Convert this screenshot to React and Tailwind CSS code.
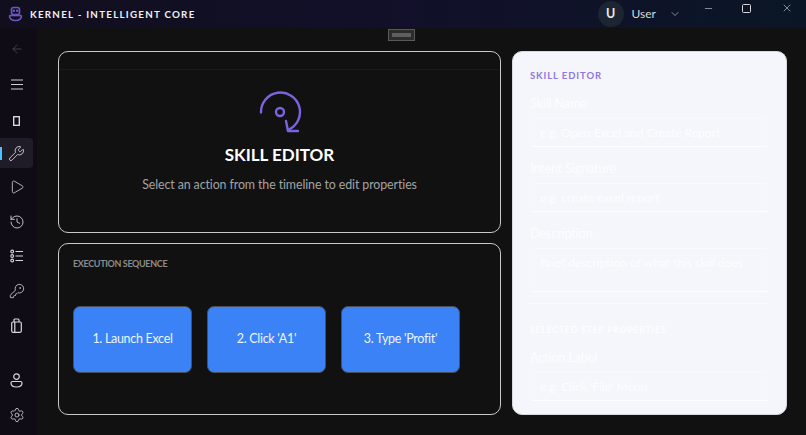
import React from "react";
import { Wrench, Play, History, Settings, KeyRound, ArrowLeft, ChevronDown, X, Minus } from "lucide-react";

function NavBtn({ children, active, className = "" }) {
  return (
    <div className={`relative w-[33px] h-[30px] flex items-center justify-center rounded-r-[4px] ${active ? "bg-[#1f1c28]" : ""} ${className}`}>
      {active && <span className="absolute left-0 top-[9px] h-[13px] w-[2px] bg-[#4cc2ff]" />}
      {children}
    </div>
  );
}

function Field({ label, placeholder, tall }) {
  return (
    <div className="flex flex-col">
      <div className="text-[12.500px] tracking-[-0.1px] leading-[18px] text-[#fcfdff]">{label}</div>
      <div className={`mt-[5px] ml-[2px] px-[7px] rounded-t-[3px] border border-x-[#f6f7fc] border-t-[#f8f9fd] border-b-[#fdfdff] ${tall ? "h-[44px]" : "h-[29px]"}`}>
        <span className="block pt-[5px] text-[12px] leading-[18px] text-[#fcfdff] whitespace-nowrap">{placeholder}</span>
      </div>
    </div>
  );
}

function Step({ children }) {
  return (
    <div className="w-[119px] h-[67px] rounded-[7px] bg-[#3b82f6] border border-[#4a4f58] flex items-center justify-center text-[12.500px] tracking-[-0.3px] text-[#eef4ff]">
      {children}
    </div>
  );
}

export default function App() {
  return (
    <div className="w-[806px] h-[435px] overflow-hidden flex flex-col bg-[#111111] font-['Lato','Noto_Sans',sans-serif]">
      <header className="h-[28px] shrink-0 flex items-center bg-gradient-to-r from-[#110e1d] via-[#12102a] to-[#0a1626]">
        <svg className="ml-[8px]" width="15" height="16" viewBox="0 0 15 16" fill="none" stroke="#6d55c4" strokeWidth="1.6">
          <rect x="3.500" y="1.500" width="8" height="7" rx="2" />
          <path d="M1.500 9.500c0 3 1.500 5 6 5s6-2 6-5" />
          <path d="M1.500 9.500h12" />
          <circle cx="5.800" cy="4.800" r=".5" fill="#6d55c4" />
          <circle cx="9.200" cy="4.800" r=".5" fill="#6d55c4" />
        </svg>
        <span className="ml-[7px] text-[9.800px] font-bold tracking-[1.240px] text-[#f0f0f4] whitespace-nowrap">KERNEL - INTELLIGENT CORE</span>
        <div className="ml-auto flex items-center">
          <div className="w-[26px] h-[26px] rounded-full bg-[#1c2532] flex items-center justify-center text-[12.500px] font-bold text-[#e8e8ec]">U</div>
          <span className="ml-[8px] text-[12px] text-[#d6d8dc]">User</span>
          <ChevronDown className="ml-[13px]" size={12} color="#c8cad0" strokeWidth={1.3} />
          <Minus className="ml-[22px] -mt-[12px]" size={11} color="#d8d8dc" strokeWidth={1.3} />
          <div className="ml-[28px] -mt-[12px] w-[9px] h-[9px] rounded-[1.500px] border border-[#d8d8dc]" />
          <X className="ml-[30px] mr-[13px] -mt-[12px]" size={12} color="#d8d8dc" strokeWidth={1.2} />
        </div>
      </header>

      <div className="flex-1 min-h-0 flex">
        <nav className="w-[37px] shrink-0 bg-[#0f0c16] flex flex-col pt-[6px]">
          <NavBtn><ArrowLeft size={14} color="#4b4852" strokeWidth={1.4} /></NavBtn>
          <NavBtn className="mt-[5px]">
            <svg width="14" height="11" viewBox="0 0 14 11" stroke="#cfcfd4" strokeWidth="1.2"><path d="M1 1h12M1 5.500h12M1 10h12" /></svg>
          </NavBtn>
          <NavBtn className="mt-[7px]">
            <svg width="7" height="10" viewBox="0 0 7 10" fill="none" stroke="#e4e4e8" strokeWidth="1.3"><rect x=".7" y=".7" width="5.600" height="8.600" /></svg>
          </NavBtn>
          <NavBtn active className="mt-[2px]"><Wrench size={17} color="#d8d8dc" strokeWidth={1.2} /></NavBtn>
          <NavBtn className="mt-[4px]"><Play size={16} color="#d8d8dc" strokeWidth={1.2} /></NavBtn>
          <NavBtn className="mt-[5px]"><History size={16} color="#d8d8dc" strokeWidth={1.3} /></NavBtn>
          <NavBtn className="mt-[4px]">
            <svg width="14" height="14" viewBox="0 0 14 14" fill="none" stroke="#d8d8dc" strokeWidth="1.1">
              <circle cx="2.200" cy="2.500" r="1.400" /><circle cx="2.200" cy="7" r="1.400" /><circle cx="2.200" cy="11.500" r="1.400" />
              <path d="M5.500 2.500H13M5.500 7H13M5.500 11.500H13" />
            </svg>
          </NavBtn>
          <NavBtn className="mt-[5px]"><KeyRound size={16} color="#d8d8dc" strokeWidth={1.2} /></NavBtn>
          <NavBtn className="mt-[4px]">
            <svg width="11" height="15" viewBox="0 0 11 15" fill="none" stroke="#d8d8dc" strokeWidth="1.2">
              <rect x=".7" y="4" width="9.600" height="10.300" rx="1.200" />
              <path d="M3.800 4v10.300M3 4V2a1 1 0 0 1 1-1h3a1 1 0 0 1 1 1v2" />
            </svg>
          </NavBtn>
          <NavBtn className="mt-[25px]">
            <svg width="13" height="15" viewBox="0 0 13 15" fill="none" stroke="#d8d8dc" strokeWidth="1.2">
              <circle cx="6.500" cy="3.600" r="2.800" />
              <path d="M1 10a1.500 1.500 0 0 1 1.500-1.500h8A1.500 1.500 0 0 1 12 10c0 2.600-2.400 4-5.500 4S1 12.600 1 10z" />
            </svg>
          </NavBtn>
          <NavBtn className="mt-[5px]"><Settings size={16} color="#d8d8dc" strokeWidth={1.2} /></NavBtn>
        </nav>

        <main className="relative flex-1 min-w-0 flex gap-[11px] pl-[21px] pt-[23px] pb-[20px]">
          <div className="absolute left-[351px] top-[1px] w-[27px] h-[12px] border border-[#5a5a5a] bg-[#2c2c2c] flex items-center justify-center">
            <span className="w-[19px] h-[4px] bg-[#5e5e5e]" />
          </div>

          <div className="w-[443px] flex flex-col gap-[10px]">
            <section className="h-[182px] rounded-[10px] border border-[#c9c9c9] bg-[#111111] flex flex-col">
              <div className="h-[18px] border-b border-[#1a1a1a]" />
              <div className="flex flex-col items-center">
                <svg className="mt-[20px]" width="44" height="44" viewBox="0 0 44 44" fill="none" stroke="#7c63e0" strokeWidth="2.400" strokeLinecap="round" strokeLinejoin="round">
                  <path d="M3 22.500A19.500 19.500 0 1 1 30 40" />
                  <circle cx="22" cy="22" r="4" />
                  <path d="M28 31 30 41h10" />
                </svg>
                <h1 className="mt-[8px] text-[17px] leading-[26px] font-bold text-white">SKILL EDITOR</h1>
                <p className="mt-[8px] text-[12.400px] tracking-[-0.1px] leading-[18px] text-[#a3a3a3]">Select an action from the timeline to edit properties</p>
              </div>
            </section>

            <section className="flex-1 rounded-[10px] border border-[#c9c9c9] bg-[#111111] pl-[14px] pt-[13px]">
              <div className="text-[9px] tracking-[-0.35px] leading-[13px] font-bold text-[#8c8c8c]">EXECUTION SEQUENCE</div>
              <div className="mt-[36px] flex gap-[15px]">
                <Step>1. Launch Excel</Step>
                <Step>2. Click 'A1'</Step>
                <Step>3. Type 'Profit'</Step>
              </div>
            </section>
          </div>

          <aside className="w-[275px] rounded-[10px] bg-[#f5f6fb] border border-[#d8d8dc] overflow-hidden pl-[17px] pr-[18px] pt-[17px]">
            <div className="text-[9.500px] leading-[14px] font-bold tracking-[0.9px] text-[#8d78e0]">SKILL EDITOR</div>
            <div className="mt-[12px] flex flex-col gap-[13px]">
              <Field label="Skill Name" placeholder="e.g. Open Excel and Create Report" />
              <Field label="Intent Signature" placeholder="e.g. create excel report" />
              <Field label="Description" placeholder="Brief description of what this skill does" tall />
            </div>
            <div className="mt-[11px] border-t border-[#f9fafd]" />
            <div className="mt-[20px] text-[8.500px] leading-[12px] font-bold tracking-[0.9px] text-[#fcfdff]">SELECTED STEP PROPERTIES</div>
            <div className="mt-[13px]">
              <Field label="Action Label" placeholder="e.g. Click 'File' Menu" />
            </div>
          </aside>
        </main>
      </div>
    </div>
  );
}
